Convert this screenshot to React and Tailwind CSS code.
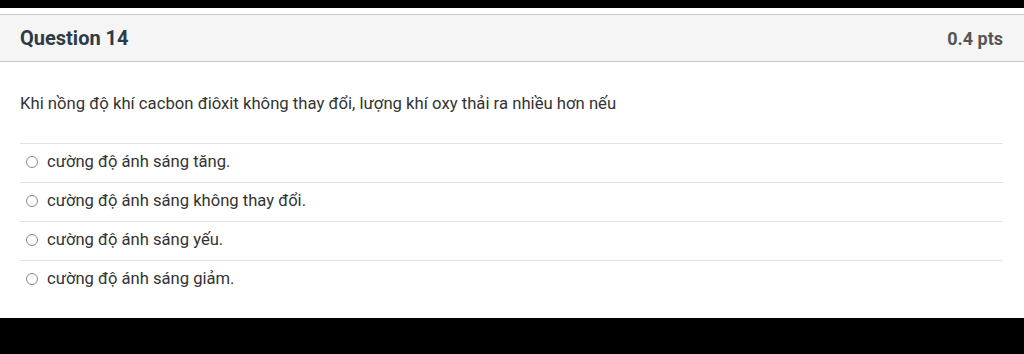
export default function App() {
  const answers = [
    "cường độ ánh sáng tăng.",
    "cường độ ánh sáng không thay đổi.",
    "cường độ ánh sáng yếu.",
    "cường độ ánh sáng giảm.",
  ];
  return (
    <div className="w-[1024px] h-[354px] bg-black flex flex-col" style={{ fontFamily: "Roboto, 'Noto Sans', sans-serif" }}>
      <div className="h-[8px] shrink-0 bg-black" />
      <div className="h-[310px] shrink-0 bg-white pt-[6px] flex flex-col">
        <div className="h-[48px] shrink-0 bg-[#f5f5f5] border-y border-[#c7c7c7] flex items-center justify-between pl-[20px] pr-[21px]">
          <span className="text-[20px] font-bold text-[#2d3b45]">Question 14</span>
          <span className="text-[18px] font-bold text-[#555]">0.4 pts</span>
        </div>
        <div className="px-[20px] pr-[21px]">
          <div className="h-[81px] pt-[3px] flex items-center text-[16.7px] text-[#333]">
            Khi nồng độ khí cacbon điôxit không thay đổi, lượng khí oxy thải ra nhiều hơn nếu
          </div>
          {answers.map((a) => (
            <div key={a} className="h-[39px] border-t border-[#e3e3e3] flex items-center pl-[6px] pb-[2px] text-[16.6px] text-[#333]">
              <span className="w-[12px] h-[12px] rounded-full border border-[#888] mr-[9px] shrink-0" />
              <span>{a}</span>
            </div>
          ))}
        </div>
      </div>
    </div>
  );
}
